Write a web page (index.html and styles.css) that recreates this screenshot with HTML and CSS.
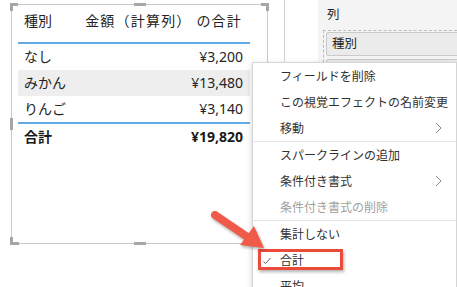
FILE: index.html
```html
<!DOCTYPE html>
<html lang="ja">
<head>
  <meta charset="UTF-8" />
  <meta name="viewport" content="width=device-width, initial-scale=1.0"/>
  <title>合計の設定</title>
  <link rel="stylesheet" href="styles.css">
</head>
<body>
  <div class="screen">
    <div class="canvas">
      <div class="visual">
        <span class="handle tl"></span>
        <span class="handle tm"></span>
        <span class="handle tr"></span>
        <span class="handle ml"></span>
        <span class="handle bl"></span>
        <span class="handle bm"></span>

        <div class="matrix">
          <div class="row head"><span>種別</span><span class="measure">金額（計算列） の合計</span></div>
          <div class="row"><span>なし</span><span>¥3,200</span></div>
          <div class="row alt"><span>みかん</span><span>¥13,480</span></div>
          <div class="row"><span>りんご</span><span>¥3,140</span></div>
          <div class="row total"><span>合計</span><span>¥19,820</span></div>
        </div>
      </div>
    </div>
    <div class="gutter"></div>
    <div class="panel">
      <div class="panel-title">列</div>
      <div class="well">
        <div class="field">種別</div>
        <div class="field"></div>
      </div>
    </div>

    <div class="menu">
      <div class="item">フィールドを削除</div>
      <div class="item">この視覚エフェクトの名前変更</div>
      <div class="item">移動<svg class="chev" width="7" height="12" viewBox="0 0 7 12"><path d="M1 1 L6 6 L1 11" /></svg></div>
      <div class="sep"></div>
      <div class="item">スパークラインの追加</div>
      <div class="item">条件付き書式<svg class="chev" width="7" height="12" viewBox="0 0 7 12"><path d="M1 1 L6 6 L1 11" /></svg></div>
      <div class="item disabled">条件付き書式の削除</div>
      <div class="sep"></div>
      <div class="item">集計しない</div>
      <div class="item checked"><svg class="check" width="8" height="8" viewBox="0 0 8 8"><path d="M0.5 4.5 L2.5 6.5 L7.5 1" /></svg>合計</div>
      <div class="item">平均</div>
    </div>

    <div class="highlight"></div>

    <svg class="arrow" width="70" height="50" viewBox="205 205 70 50">
      <line x1="215" y1="215" x2="246" y2="236" />
      <polygon points="264,248 240,245 254,226" />
    </svg>
  </div>
</body>
</html>
```

FILE: styles.css
```css
body { margin: 0; background: #fff; font-family: "Noto Sans", "Noto Sans CJK JP", sans-serif; color: #252423; }
.screen { position: relative; width: 457px; height: 287px; overflow: hidden; display: flex; }

.canvas { width: 285px; flex: none; box-sizing: border-box; border-right: 1px solid #d2d2d2; }
.visual { position: relative; box-sizing: border-box; width: 257px; height: 240px; margin: 4px 0 0 11px; border: 1px solid #c8c8c8; padding: 0 17px 0 6px; }

.handle { position: absolute; background: #a6a6a6; }
.handle.tl { left: -2px; top: -2px; width: 8px; height: 3px; }
.handle.tl::after, .handle.bl::after, .handle.tr::after { content: ""; position: absolute; width: 3px; height: 8px; background: #a6a6a6; }
.handle.tl::after { left: 0; top: 0; }
.handle.tr { right: -2px; top: -2px; width: 8px; height: 3px; }
.handle.tr::after { right: 0; top: 0; }
.handle.bl { left: -2px; bottom: -2px; width: 9px; height: 3px; }
.handle.bl::after { left: 0; bottom: 0; }
.handle.tm { left: 122px; top: -2px; width: 12px; height: 3px; }
.handle.bm { left: 122px; bottom: -2px; width: 12px; height: 3px; }
.handle.ml { left: -2px; top: 113px; width: 3px; height: 12px; }

.matrix { font-size: 14px; }
.row { display: flex; justify-content: space-between; height: 26px; line-height: 26px; padding: 0 7px 0 6px; }
.row.head { height: 39px; line-height: 20px; padding-top: 6px; box-sizing: border-box; border-bottom: 2px solid #62aae6; }
.row.head .measure { letter-spacing: 1.2px; margin-right: 1px; }
.row.alt { background: #eeeeee; }
.row.total { border-top: 2px solid #62aae6; font-weight: bold; color: #1a1a1a; }

.gutter { width: 33px; flex: none; }
.panel { flex: 1; background: #f4f4f4; padding: 5px 0 0 5px; font-size: 12.5px; }
.panel-title { padding-left: 4px; height: 20px; line-height: 20px; }
.well { margin-top: 5px; border: 1px dashed #bdbdbd; border-right: none; padding: 1px 0 0 2px; }
.field { height: 22px; line-height: 22px; background: #ebebeb; border: 1px solid #cacaca; border-right: none; border-radius: 3px 0 0 3px; padding-left: 5px; margin-bottom: 3px; }

.menu { position: absolute; left: 252px; top: 62px; width: 203px; background: #fff; border: 1px solid #d6d6d6; border-bottom: none; box-shadow: 0 2px 6px rgba(0,0,0,0.18); font-size: 12px; color: #323130; }
.item { position: relative; display: flex; justify-content: space-between; align-items: center; height: 26px; padding: 0 14px 0 27px; white-space: nowrap; }
.item.disabled { color: #a19f9d; }
.sep { height: 1px; background: #e4e4e4; }
.chev path { fill: none; stroke: #8a8886; stroke-width: 1; }
.check { position: absolute; left: 10px; top: 10px; }
.check path { fill: none; stroke: #605e5c; stroke-width: 1; }

.highlight { position: absolute; left: 258px; top: 249px; width: 85px; height: 21px; box-sizing: border-box; border: 3px solid #ec4a3b; box-shadow: 1px 2px 3px rgba(0,0,0,0.3); }

.arrow { position: absolute; left: 205px; top: 205px; filter: drop-shadow(1px 2px 1.5px rgba(0,0,0,0.3)); }
.arrow line { stroke: #f05a48; stroke-width: 8; stroke-linecap: round; }
.arrow polygon { fill: #f05a48; }
```
